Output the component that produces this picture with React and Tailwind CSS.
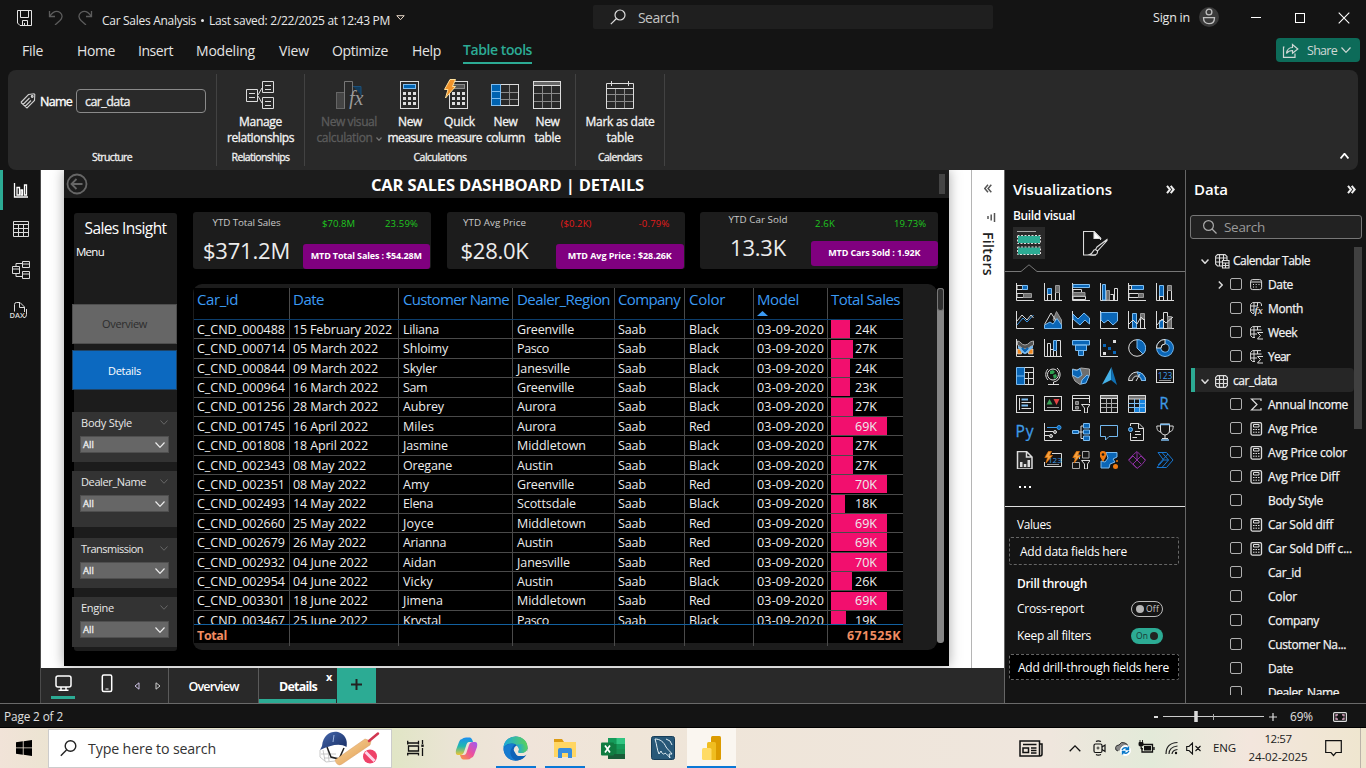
import React, { useLayoutEffect, useRef } from "react";

/* A single line of text whose tracking is tuned so that it fills w pixels. */
function T({ w, className = "", vertical, children }) {
  const ref = useRef(null);
  useLayoutEffect(() => {
    const el = ref.current;
    if (!w || !el) return;
    el.style.letterSpacing = "0px";
    const box = el.getBoundingClientRect();
    const natural = vertical ? box.height : box.width;
    el.style.letterSpacing = (w - natural) / el.textContent.length + "px";
  }, [w, vertical, children]);
  return (
    <span ref={ref} className={"inline-block shrink-0 whitespace-nowrap " + className}>
      {children}
    </span>
  );
}

const W = "#dcdcdc";
const B = "#0a66b7";
const L = "#7cbcf0";
const G = "#6e6e6e";

function Svg({ w = 18, h, vb, className = "", children, sw = 1 }) {
  const hh = h || w;
  return (
    <svg width={w} height={hh} viewBox={vb || `0 0 ${w} ${hh}`} fill="none" stroke={W} strokeWidth={sw} className={"block shrink-0 " + className}>
      {children}
    </svg>
  );
}

function Chevron({ w = 8, h = 5, sw = 1.2, c = W, dir = "down", className = "" }) {
  const d = { down: `M.5 .5L${w / 2} ${h - 0.7}L${w - 0.5} .5`, up: `M.5 ${h - 0.5}L${w / 2} .7L${w - 0.5} ${h - 0.5}`, right: `M.8 .5L${w - 0.8} ${h / 2}L.8 ${h - 0.5}` }[dir];
  return (
    <Svg w={w} h={h} sw={sw} className={className}>
      <path d={d} stroke={c} />
    </Svg>
  );
}

/* ---------- Title bar ---------- */
function TitleBar() {
  return (
    <div className="flex h-[35px] items-center">
      <Svg w={16} className="ml-[17px]">
        <path d="M.5.5H14.500V15.500H3L.5 13Z M3.500.5V7.500H11.500V.5 M5.500 15V10.500H10.500V15 M7.500 13V15" stroke="#e6e6e6" />
      </Svg>
      <Svg w={15} className="ml-[15px]" sw={1.3}>
        <path d="M1.5 1V6.5H7 M1.5 6.5C5 1.5 9 .5 12 2.5C15 5 14.500 8 12 10.500L7 15" stroke="#5c5c5c" />
      </Svg>
      <Svg w={15} className="ml-[15px]" sw={1.3}>
        <path d="M13.500 1V6.500H8 M13.500 6.500C10 1.500 6 .5 3 2.500C0 5 .5 8 3 10.500L8 15" stroke="#5c5c5c" />
      </Svg>
      <div className="ml-[9px] mt-[6px] flex h-5 items-center text-[12px] leading-5 text-[#e8e8e8]">
        <T w={94}>Car Sales Analysis</T>
        <span className="mx-[5px] mt-[-1px] size-[3px] rounded-full bg-[#e8e8e8]" />
        <T w={181}>Last saved: 2/22/2025 at 12:43 PM</T>
      </div>
      <Svg w={9} h={6} className="ml-[6px]">
        <path d="M.8.7H8.200L4.500 4.700Z" stroke="#e8d8c8" />
      </Svg>
      <div className="ml-[188px] mt-[-1px] flex h-6 w-[400px] items-center rounded-[2px] bg-[#1f1f1f]">
        <Svg w={16} className="ml-[17px]" sw={1.2}>
          <circle cx="10" cy="6" r="5" /><path d="M6.500 9.500L.8 15.200" />
        </Svg>
        <T w={41} className="ml-3 text-[14px] text-[#c4c4c4]">Search</T>
      </div>
      <T w={37} className="ml-[160px] mt-[2px] text-[12.500px] text-[#e8e8e8]">Sign in</T>
      <div className="ml-[9px] mt-[-2px] flex size-5 items-center justify-center rounded-full bg-[#3a3a3a]">
        <Svg w={14} h={17} sw={1.300}>
          <circle cx="7" cy="4" r="2.900" stroke="#c0c0c0" /><path d="M1.500 9.700H12.500C12.500 13.500 10.500 15.700 7 15.700S1.500 13.500 1.500 9.700Z" stroke="#c0c0c0" />
        </Svg>
      </div>
      <div className="ml-[32px] h-px w-[10px] bg-white" />
      <div className="ml-[34px] size-[10px] border border-white" />
      <Svg w={12} className="ml-[33px]" sw={1.100}>
        <path d="M.7.7L11.300 11.300M11.300.7L.7 11.300" stroke="#fff" />
      </Svg>
    </div>
  );
}

function MenuBar() {
  return (
    <div className="flex h-[35px] items-center pb-[5px] text-[14px] text-[#e4e4e4]">
      <T w={21} className="ml-[22px]">File</T>
      <T w={38} className="ml-[34px]">Home</T>
      <T w={35} className="ml-[23px]">Insert</T>
      <T w={59} className="ml-[23px]">Modeling</T>
      <T w={30} className="ml-[24px]">View</T>
      <T w={56} className="ml-[23px]">Optimize</T>
      <T w={29} className="ml-[24px]">Help</T>
      <div className="ml-[22px] flex h-7 items-start border-b-2 border-[#2cab94] font-semibold text-[#2cab94]">
        <T w={69} className="leading-[27px]">Table tools</T>
      </div>
      <div className="ml-[744px] flex h-6 w-[84px] items-center rounded-[4px] bg-[#0d6b59] text-[#d0d8d5]">
        <Svg w={17} h={15} className="ml-[6px]" sw={1.200}>
          <path d="M2.500 4H1.500V14.300H13V10.500M4.500 10.500C5 6.500 7 4.500 10.500 4.500V1.500L15.800 6L10.500 10.200V7.500C8 7.500 6 8.300 4.500 10.500Z" stroke="#d0d8d5" />
        </Svg>
        <T w={30} className="ml-[8px] mt-[2px] text-[12.500px]">Share</T>
        <Chevron w={10} h={6} c="#d0d8d5" className="ml-[4px]" />
      </div>
    </div>
  );
}

/* ---------- Ribbon ---------- */
function Calc({ blue }) {
  return (
    <>
      <rect x="5.500" y=".5" width="18" height="27" />
      <rect x="8.500" y="3.500" width="12" height="4" fill={blue ? "#0063b1" : "#555"} stroke={blue ? L : "#8a8a8a"} />
      {[11, 16, 21].map((y) => [8, 13, 18].map((x) => <rect key={x + "-" + y} x={x} y={y} width="3" height="3" fill={W} stroke="none" />))}
    </>
  );
}

function Tool({ w, icon, a, b, wa, wb, off, className = "" }) {
  return (
    <div className={"flex shrink-0 flex-col items-center text-[12px] leading-4 [-webkit-text-stroke:0.300px] " + (off ? "text-[#5c5c5c] " : "text-[#f4f4f4] ") + className} style={{ width: w }}>
      <div className="mb-[5px] h-7">{icon}</div>
      <T w={wa}>{a}</T>
      <div className="flex items-center">
        <T w={wb}>{b}</T>
        {off && <Chevron w={6} h={4} c="#777" className="ml-[3px] mt-[2px]" />}
      </div>
    </div>
  );
}

function Group({ w, label, lw, children }) {
  return (
    <div className="flex h-[92px] shrink-0 flex-col items-center border-r border-[#424242]" style={{ width: w }}>
      <div className="flex h-[75px] w-full pt-[7px]">{children}</div>
      <T w={lw} className="text-[10.500px] leading-[18px] text-[#f0f0f0] [-webkit-text-stroke:0.300px]">{label}</T>
    </div>
  );
}

function Ribbon() {
  return (
    <div className="ml-2 flex h-[100px] w-[1350px] rounded-[8px] bg-[#292929] pt-1">
      <Group w={209} label="Structure" lw={40}>
        <Svg w={16} className="ml-[12px] mt-[12px]" sw={1.100}>
          <path d="M.8 9.500L8.500 1.500L14 .8L14.800 1.500L14.500 7.500L7 15L1 9.500M3 11.500L9.500 5M5 13.500L11 7.500" stroke="#cfcfcf" /><circle cx="12.200" cy="3.500" r=".9" />
        </Svg>
        <T w={32} className="ml-[4px] mt-[11px] text-[12.500px] leading-5 text-white [-webkit-text-stroke:0.350px]">Name</T>
        <div className="ml-[4px] mt-[8px] flex h-6 w-[130px] items-center rounded-[4px] border border-[#8a8a8a] pl-2">
          <T w={45} className="mt-[2px] text-[12.500px] text-[#f0f0f0] [-webkit-text-stroke:0.300px]">car_data</T>
        </div>
      </Group>
      <Group w={88} label="Relationships" lw={58}>
        <Tool w={87} a="Manage" wa={43} b="relationships" wb={67} icon={
          <Svg w={28} className="mr-px">
            <path d="M.5 8.500H11.500V20.500H.5ZM16.500.5H27.500V11.500H16.500ZM16.500 16.500H27.500V27.500H16.500ZM3 12.500H9M3 16.500H9M19 4.500H25M19 8.500H25M19 20.500H25M19 24.500H25M12 14L16 7M12 15L16 22" />
          </Svg>} />
      </Group>
      <Group w={271} label="Calculations" lw={53}>
        <Tool off className="ml-[9px]" w={70} a="New visual" wa={56} b="calculation" wb={56} icon={
          <Svg w={28} className="ml-[2px]">
            <rect x=".5" y="11.500" width="8" height="16" fill="#444" stroke="#666" /><path d="M8.500 27.500V.5H16.500V14" stroke="#777" />
            <path d="M17 5.500H25V14" fill="#123c5c" stroke="#1c5079" />
            <text x="13" y="24" stroke="none" fill="#999" fontSize="20" fontStyle="italic" fontFamily="Liberation Serif, serif">fx</text>
          </Svg>} />
        <Tool w={52} a="New" wa={24} b="measure" wb={45} icon={<Svg w={28} className="mr-[2px]"><Calc blue /></Svg>} />
        <Tool w={47} a="Quick" wa={31} b="measure" wb={45} icon={
          <Svg w={28} h={31} className="-mt-[3px] mr-[3px]">
            <g transform="translate(0 3)"><Calc /></g>
            <path d="M6 1.500H11.500L8.500 8.500H11.500L1.500 20L4 11.500H.5Z" fill="#f0932b" stroke="#ffdf9a" />
          </Svg>} />
        <Tool w={45} a="New" wa={24} b="column" wb={39} icon={
          <Svg w={28} className="mr-px">
            <path d="M1 11.500H27M1 18.500H27M18.500 4V25" stroke="#8a8a8a" />
            <rect x=".5" y="3.500" width="27" height="21" /><path d="M.5 3.500H9.500V24.500H.5ZM.5 10.500H9.500M.5 17.500H9.500" fill="#0063b1" stroke={L} />
          </Svg>} />
        <Tool w={39} a="New" wa={24} b="table" wb={26} icon={
          <Svg w={28} className="mr-px">
            <rect x=".5" y=".5" width="27" height="4" fill="#666" /><path d="M1 12.500H27M1 20.500H27M9.500 5V27M18.500 5V27" stroke="#8a8a8a" /><rect x=".5" y=".5" width="27" height="27" />
          </Svg>} />
      </Group>
      <Group w={89} label="Calendars" lw={44}>
        <Tool w={88} a="Mark as date" wa={69} b="table" wb={27} icon={
          <Svg w={28}>
            <path d="M1 13.500H27M1 20.500H27M9.500 8V27M18.500 8V27" stroke="#8a8a8a" /><path d="M.5 2.500H27.500V27.500H.5ZM.5 7.500H27.500M5.500 0V5M22.500 0V5" />
          </Svg>} />
      </Group>
      <div className="flex flex-1 items-end justify-end pb-[11px] pr-[9px]">
        <Chevron dir="up" w={9} h={6} sw={1.800} c="#fff" />
      </div>
    </div>
  );
}

/* ---------- Left rail ---------- */
function Rail() {
  return (
    <div className="flex w-[41px] shrink-0 flex-col items-center border-r border-[#4a4a4a]">
      <div className="flex h-10 w-full items-center border-l-[3px] border-[#2cab94] pl-[10px]">
        <Svg w={15} sw={1.300}><path d="M1.500 0V14H15M4 12V4.500H6.500V12ZM8 12V7H9.500V12ZM11.500 12V2H13.500V12Z" stroke="#fff" /></Svg>
      </div>
      <Svg w={16} className="ml-px mt-[11px]"><path d="M.5.5H15.500V15.500H.5ZM.5 3.500H15.500M.5 7.500H15.500M.5 11.500H15.500M5.500 3.500V15.500M10.500 3.500V15.500" /></Svg>
      <Svg w={18} className="ml-px mt-[24px]"><path d="M.5 5.500H7.500V12.500H.5ZM.5 8H7.500M10.500.5H17.500V6.500H10.500ZM10.500 3H17.500M10.500 10.500H17.500V17.500H10.500ZM10.500 13H17.500M4 5V2.500H10M4 13V15.500H10" /></Svg>
      <Svg w={20} h={17} className="mr-[2px] mt-[23px]">
        <path d="M5.500 9.500V2.500Q5.500.5 7.500.5H11L15.500 5V10M10.500.5V5.500H15.500M17.500 7V12.500Q17.500 15.500 15 15.800" />
        <text x=".5" y="16" stroke="none" fill={W} fontSize="7.500" fontFamily="Open Sans, sans-serif" fontWeight="600">DAX</text>
      </Svg>
    </div>
  );
}

/* ---------- Report page ---------- */
function Slicer({ label, lw, className = "" }) {
  return (
    <div className={"-ml-[2px] w-[105px] bg-[#333333] px-2 pt-[2px] " + className}>
      <div className="flex h-[18px] items-center justify-between pr-px">
        <T w={lw} className="ml-[1px] text-[11px] text-[#e8e8e8]">{label}</T>
        <Chevron w={8} h={5} c="#666" sw={1} className="mb-[2px]" />
      </div>
      <div className="mt-[4px] flex h-[17px] items-center justify-between border border-[#4f4f4f] bg-[#666666] pl-[2px] pr-[3px]">
        <T w={11} className="mt-[2px] text-[9.500px] text-[#f0f0f0] [-webkit-text-stroke:0.300px]">All</T>
        <Chevron w={10} h={6} c="#eee" sw={1.200} />
      </div>
    </div>
  );
}

function SidePanel() {
  return (
    <div className="ml-[10px] mt-[15px] h-[438px] w-[103px] shrink-0 rounded-[3px] bg-[#1c1c1c]">
      <div className="flex h-[28px] items-center justify-center"><T w={82} className="mt-[4px] text-[15.500px] text-white">Sales Insight</T></div>
      <div className="flex h-5 items-center pl-[2px]"><T w={28} className="mt-[2px] text-[11.500px] text-white">Menu</T></div>
      <div className="-ml-[2px] mt-[43px] flex h-[40px] w-[105px] items-center justify-center border border-[#4e4e4e] bg-[#666666]"><T w={45} className="text-[11px] text-[#2d2d2d]">Overview</T></div>
      <div className="-ml-[2px] mt-[6px] flex h-[40px] w-[105px] items-center justify-center border border-[#1e4468] bg-[#0c69c0]"><T w={33} className="mt-[2px] text-[11px] text-white">Details</T></div>
      <Slicer label="Body Style" lw={51} className="mt-[22px] h-[50px]" />
      <Slicer label="Dealer_Name" lw={65} className="mt-[9px] h-[56px]" />
      <Slicer label="Transmission" lw={62} className="mt-[11px] h-[50px]" />
      <Slicer label="Engine" lw={33} className="mt-[9px] h-[50px]" />
    </div>
  );
}

function Card({ label, lw, value, vw, left, color, d1, d1w, d2, d2w, dl, dg, btn, bw, lead, up }) {
  return (
    <div className="flex h-[57px] w-[238px] shrink-0 rounded-[3px] bg-[#1c1c1c]">
      <div className={"flex shrink-0 flex-col items-center " + lead + (up ? " mt-0" : " mt-[3px]")} style={{ width: left }}>
        <T w={lw} className="text-[9.800px] leading-[15px] text-[#c9c9c9]">{label}</T>
        <T w={vw} className="mt-[4px] text-[22px] leading-[32px] text-[#ececec]">{value}</T>
      </div>
      <div className="flex flex-1 flex-col items-end">
        <div className={"flex h-[14px] w-full items-center pt-[11px] text-[9.500px] " + color}>
          <span className={dl}><T w={d1w}>{d1}</T></span>
          <span className={dg}><T w={d2w}>{d2}</T></span>
        </div>
        <div className={"flex h-[25px] w-[127.500px] items-center justify-center rounded-[3px] bg-[#80007f] pb-[2px] " + (up ? "mt-[15px]" : "mr-px mt-[18px]")}>
          <T w={bw} className="text-[9px] font-bold text-white">{btn}</T>
        </div>
      </div>
    </div>
  );
}

const cols = [
  ["Car_id", 41, "w-[96px]"], ["Date", 31, "w-[109px]"], ["Customer Name", 106, "w-[114px]"], ["Dealer_Region", 93, "w-[102px]"],
  ["Company", 62, "w-[70px]"], ["Color", 36, "w-[69px]"], ["Model", 42, "w-[74px]"], ["Total Sales", 69, "w-[76px]"],
];
const rows = [
  ["C_CND_000488", "15 February 2022", "Liliana", "Greenville", "Black", 24], ["C_CND_000714", "05 March 2022", "Shloimy", "Pasco", "Black", 27],
  ["C_CND_000844", "09 March 2022", "Skyler", "Janesville", "Black", 24], ["C_CND_000964", "16 March 2022", "Sam", "Greenville", "Black", 23],
  ["C_CND_001256", "28 March 2022", "Aubrey", "Aurora", "Black", 27], ["C_CND_001745", "16 April 2022", "Miles", "Aurora", "Red", 69],
  ["C_CND_001808", "18 April 2022", "Jasmine", "Middletown", "Black", 27], ["C_CND_002343", "08 May 2022", "Oregane", "Austin", "Black", 27],
  ["C_CND_002351", "08 May 2022", "Amy", "Greenville", "Red", 70], ["C_CND_002493", "14 May 2022", "Elena", "Scottsdale", "Black", 18],
  ["C_CND_002660", "25 May 2022", "Joyce", "Middletown", "Red", 69], ["C_CND_002679", "26 May 2022", "Arianna", "Austin", "Red", 69],
  ["C_CND_002932", "04 June 2022", "Aidan", "Janesville", "Red", 70], ["C_CND_002954", "04 June 2022", "Vicky", "Austin", "Black", 26],
  ["C_CND_003301", "18 June 2022", "Jimena", "Middletown", "Red", 69], ["C_CND_003467", "25 June 2022", "Krystal", "Pasco", "Black", 19],
];
const textWidths = {
  "15 February 2022": 99, "05 March 2022": 85, "09 March 2022": 85, "16 March 2022": 85, "28 March 2022": 85, "16 April 2022": 75, "18 April 2022": 75,
  "08 May 2022": 73, "14 May 2022": 73, "25 May 2022": 73, "26 May 2022": 73, "04 June 2022": 75, "18 June 2022": 75, "25 June 2022": 75,
  Liliana: 36, Shloimy: 45, Skyler: 34, Sam: 24, Aubrey: 41, Miles: 31, Jasmine: 45, Oregane: 49, Amy: 26, Elena: 30, Joyce: 31, Arianna: 43, Aidan: 33, Vicky: 30, Jimena: 40, Krystal: 38,
  Greenville: 57, Pasco: 32, Janesville: 53, Aurora: 39, Middletown: 69, Austin: 36, Scottsdale: 59, Black: 30, Red: 21,
};

function Cell({ i, children, className = "" }) {
  const pad = i === 2 || i === 3 || i === 5 ? "pl-[4px] " : "pl-[3px] ";
  return <div className={"flex shrink-0 items-center [&>span]:mt-[2px] " + pad + cols[i][2] + (i < 7 ? " border-r border-[#4a4a4a] " : " ") + className}>{children}</div>;
}

function DataTable() {
  return (
    <div className="h-[366px] w-[744px] rounded-[9px] bg-[#1c1c1c] pt-1">
      <div className="ml-px flex h-[355px] w-[709px] flex-col bg-black">
        <div className="flex h-[32px] shrink-0 border-b border-[#0c3d6b] text-[15px] text-[#3b9af3]">
          {cols.map(([name, w], i) => (
            <Cell i={i} key={name} className="!items-start">
              <div className="flex flex-col">
                <T w={w} className="leading-[23px]">{name}</T>
                {name === "Model" && <Svg w={11} h={5}><path d="M5.500 0L11 5H0Z" fill="#3b9af3" stroke="none" /></Svg>}
              </div>
            </Cell>
          ))}
        </div>
        <div className="h-[304px] shrink-0 overflow-hidden text-[12.500px] text-[#ededed]">
          {rows.map((r) => (
            <div key={r[0]} className="flex h-[19.400px] border-b border-[#4a4a4a]">
              <Cell i={0}><T w={88}>{r[0]}</T></Cell>
              <Cell i={1}><T w={textWidths[r[1]]}>{r[1]}</T></Cell>
              <Cell i={2}><T w={textWidths[r[2]]}>{r[2]}</T></Cell>
              <Cell i={3}><T w={textWidths[r[3]]}>{r[3]}</T></Cell>
              <Cell i={4}><T w={28}>Saab</T></Cell>
              <Cell i={5}><T w={textWidths[r[4]]}>{r[4]}</T></Cell>
              <Cell i={6}><T w={67}>03-09-2020</T></Cell>
              <Cell i={7} className="relative">
                <div className="h-[18px] bg-[#f20f6e]" style={{ width: r[5] * 0.805 }} />
                <T w={22} className="absolute left-[27px]">{r[5] + "K"}</T>
              </Cell>
            </div>
          ))}
        </div>
        <div className="flex flex-1 border-t border-[#12609f] text-[12.500px] font-bold text-[#f08d62]">
          {cols.map(([name], i) => (
            <Cell i={i} key={name} className={i === 7 ? "justify-end pr-[3px]" : ""}>
              {i === 0 && <T w={30}>Total</T>}
              {i === 7 && <T w={54}>671525K</T>}
            </Cell>
          ))}
        </div>
      </div>
    </div>
  );
}

function ReportPage() {
  return (
    <div className="ml-[23px] h-[496px] w-[885px] shrink-0 bg-black shadow-[0_0_12px_rgba(0,0,0,0.35)]">
      <div className="flex h-[28px] items-center bg-[#1c1c1c]">
        <Svg w={22} sw={1.800} className="ml-[2px]"><circle cx="11" cy="11" r="9.500" stroke="#666" /><path d="M16.500 11H6M10.500 6L5.500 11L10.500 16" stroke="#666" /></Svg>
        <T w={273} className="ml-[283px] mt-[2px] text-[16.500px] font-bold text-white">CAR SALES DASHBOARD | DETAILS</T>
        <div className="ml-[295px] h-5 w-[6px] bg-[#444]" />
      </div>
      <div className="flex">
        <SidePanel />
        <div className="ml-[16px] mt-[14px]">
          <div className="flex gap-[15.500px]">
            <Card label="YTD Total Sales" lw={68} value="$371.2M" vw={87} left={87} lead="ml-[10px]" color="text-[#1fc71f]" d1="$70.8M" d1w={33} d2="23.59%" d2w={33} dl="ml-[32px]" dg="ml-[30px]" btn="MTD Total Sales : $54.28M" bw={111} />
            <Card label="YTD Avg Price" lw={63} value="$28.0K" vw={68} left={68} lead="ml-[14px]" color="text-[#e31b1b]" d1="($0.2K)" d1w={31} d2="-0.79%" d2w={31} dl="ml-[32px]" dg="ml-[47px]" btn="MTD Avg Price : $28.26K" bw={104} />
            <Card up label="YTD Car Sold" lw={59} value="13.3K" vw={56} left={60} lead="ml-[28px]" color="text-[#1fc71f]" d1="2.6K" d1w={20} d2="19.73%" d2w={32} dl="ml-[27px]" dg="ml-[59px]" btn="MTD Cars Sold : 1.92K" bw={92} />
          </div>
          <div className="mt-[15px] flex">
            <DataTable />
            <div className="mt-1 h-[355px] w-[7px] rounded-[3px] bg-[#858585]"><div className="h-[23px] rounded-[3px] border border-[#777] bg-[#303030]" /></div>
          </div>
        </div>
      </div>
    </div>
  );
}

function PageTabs() {
  return (
    <div className="flex h-[35px] bg-[#292929] font-semibold text-white">
      <div className="mb-[4px] ml-[10px] flex w-6 flex-col items-center border-b-[3px] border-[#2cab94] pt-[7px]">
        <Svg w={17} h={17} sw={1.500}><rect x="1" y="1" width="15" height="11" rx="2" stroke="#fff" /><path d="M6 12V14.500M11 12V14.500M3.500 15.200H13.500" stroke="#fff" /></Svg>
      </div>
      <Svg w={12} h={19} sw={1.500} className="ml-[26px] mt-[6px]"><rect x="1.300" y="1" width="9.400" height="16.500" rx="1.500" stroke="#fff" /><path d="M4.500 15H7.500" stroke="#fff" strokeWidth="1" /></Svg>
      <Svg w={6} h={8} className="ml-[21px] mt-[14px]"><path d="M5 .8V7.200L1 4Z" stroke="#cfc4e6" /></Svg>
      <Svg w={6} h={8} className="ml-[15px] mt-[14px]"><path d="M1 .8V7.200L5 4Z" stroke="#cfcfcf" /></Svg>
      <div className="ml-[7px] flex w-[91px] items-center justify-center border-x border-[#5a5a5a] pt-[3px] text-[12.500px]"><T w={50}>Overview</T></div>
      <div className="flex w-[77px] items-center border-b-[4px] border-[#2cab94] pl-[20px] pt-[3px]"><T w={38} className="mt-[4px] text-[12.500px] font-bold">Details</T><span className="mb-[18px] ml-[9px] text-[11px] font-bold leading-none">x</span></div>
      <div className="ml-px flex w-[39px] items-center justify-center bg-[#2cab94]"><Svg w={11} className="mb-[3px]" sw={2}><path d="M5.500 0V11M0 5.500H11" stroke="#222" /></Svg></div>
    </div>
  );
}

function FiltersRail() {
  return (
    <div className="flex w-[33px] shrink-0 flex-col items-center border-l border-[#b5b5b5] bg-white">
      <Svg w={8} h={9} className="mt-[14px]" sw={1.500}><path d="M4 .8L.8 4.500L4 8.200M7.300.8L4.100 4.500L7.300 8.200" stroke="#555" /></Svg>
      <Svg w={10} h={9} className="ml-[6px] mt-[20px]" sw={1.500}><path d="M8.500 0V9M5.200 1.500V7.500M2 3V6" stroke="#555" /></Svg>
      <T w={44} vertical className="mt-[10px] text-[14px] font-semibold leading-4 text-[#222] [writing-mode:vertical-rl]">Filters</T>
    </div>
  );
}

/* ---------- Visualization icons ---------- */
const axis = <path d="M.5 0V17.500H18" />;
const bolt = <path d="M4.500.3H7.500L5.500 4.500H8.500L2 12L3.500 6.500H.8Z" fill="#f5a03c" stroke="#e06c00" strokeWidth=".7" />;
const num = (x, y, s) => <text x={x} y={y} stroke="none" fill="#3f9ce8" fontSize={s} fontFamily="Open Sans, sans-serif">123</text>;

const vizIcons = [
  <>{axis}<path d="M1 2.500H6.500V6.500H1ZM1 10.500H7.500V14.500H1Z" /><path d="M6.500 2.500H11.500V6.500H6.500Z" fill={B} stroke={L} /><path d="M7.500 10.500H15.500V14.500H7.500Z" fill={G} stroke="#999" /></>,
  <>{axis}<path d="M3.500 5.500H7.500V11.500H3.500Z" fill={B} stroke={L} /><path d="M3.500 11.500H7.500V17.500H3.500ZM11.500 9.500H15.500V17.500H11.500Z" /><path d="M11.500 2.500H15.500V9.500H11.500Z" fill={G} stroke="#999" /></>,
  <>{axis}<path d="M1 1.500H17.500V4.500H1Z" fill={B} stroke={L} /><path d="M1 6.500H9.500V9.500H1ZM1 13.500H13.500V16.500H1Z" /><path d="M1 9.500H13V13H1Z" fill={G} stroke="#999" /></>,
  <>{axis}<path d="M2.500 1.500H5.500V17H2.500Z" fill={B} stroke={L} /><path d="M6.500 7.500H9.500V17H6.500Z" fill={G} stroke="#999" /><path d="M10.500 11.500H13.500V17M14.500 17V5.500H17.500V17" /></>,
  <>{axis}<path d="M3.500 2.500H15.500V6.500H3.500Z" fill={B} stroke={L} /><path d="M1 2.500H3.500V6.500H1ZM1 10.500H10.500V14.500H1Z" /><path d="M10.500 10.500H15.500V14.500H10.500Z" fill={G} stroke="#999" /></>,
  <>{axis}<path d="M3.500 2.500H7.500V13.500H3.500Z" fill={B} stroke={L} /><path d="M3.500 13.500H7.500V17M3.500 13V17M11.500 17V7.500H15.500V17" /><path d="M11.500 2.500H15.500V7.500H11.500Z" fill={G} stroke="#999" /></>,
  <>{axis}<path d="M1 14L7 7L11 11L17.500 4" stroke="#3794e3" /><path d="M1 10L6 4L11 9L15 4L17.500 7" /></>,
  <><path d="M9 9L12.500.5L17.500 9V17Z" fill={G} stroke="#999" /><path d="M.5 13.500L7 2L15 14" /><path d="M.5 17.500V14L6 11L9 13L13 7.500L17.500 14V17.500Z" fill={B} stroke={L} /></>,
  <>{axis}<path d="M1 3L6 8L12 2L17.500 7V13L13 9L8 14L1 8Z" fill={B} stroke={L} /></>,
  <>{axis}<path d="M1 1.500H17.500V10L13 14L8 9L4 12L1 9Z" fill={B} stroke={L} /></>,
  <>{axis}<path d="M4.500 2.500H8.500V17H4.500Z" fill={B} stroke={L} /><path d="M12.500 2.500H16.500V8H12.500Z" fill={G} stroke="#999" /><path d="M12.500 8V17M16.500 8V17M1 13L5 9L9 13L13 6L17 10" /></>,
  <>{axis}<path d="M3.500 9.500H7.500V17H3.500Z" fill={B} stroke={L} /><path d="M7.500 17V1.500H11.500V17" /><path d="M11.500 5.500H15.500V17H11.500Z" fill={G} stroke="#999" /><path d="M1 14L6 8L10 12L17 6" /></>,
  <>{axis}<path d="M1.500 2C5 2 5 6 9 6S13 2 17.500 2V6C14 7 13 10 9 10S5 7 1.500 6Z" fill="#555" stroke="#aaa" /><path d="M1.500 10H5.500V15H1.500ZM12.500 10H17V15H12.500Z" fill="#f08a24" stroke="#fff" strokeWidth=".6" /><path d="M2 8C5 8 6 14 9 14S13 8 17 8" stroke={L} strokeWidth="2.500" /><path d="M6 9L9 12L12 9" stroke={B} strokeWidth="2" /></>,
  <>{axis}<path d="M3.500 4.500H6.500V17M6.500 10.500H9.500V17M3.500 4.500V17M9.500 6V17M12.500 12V17M12.500 1.500H16.500V17" /><path d="M9.500 1.500H12.500V11.500H9.500Z" fill={B} stroke={L} /></>,
  <><path d="M.5 1.500H17.500V6H.5ZM3.500 6H14.500V11.500H3.500ZM6.500 11.500H11.500V16.500H6.500Z" fill={B} stroke={L} /></>,
  <>{axis}<path d="M13 1h3v3h-3zM3 13h3v3h-3z" fill={W} stroke="none" /><path d="M3 5h3v3h-3zM8 8h3v3h-3zM13 12h3v3h-3z" fill={B} stroke="none" /></>,
  <><circle cx="9" cy="9" r="8.300" /><path d="M9 .7A8.300 8.300 0 0 1 15 15L9 9Z" fill={B} stroke={L} /></>,
  <><circle cx="9" cy="9" r="6.300" stroke={L} strokeWidth="5.200" /><circle cx="9" cy="9" r="6.300" stroke={B} strokeWidth="3.500" /><path d="M.5 9A8.500 8.500 0 0 1 9 .5V5A4 4 0 0 0 5 9Z" fill="#181818" /></>,
  <><path d="M.5.5H8.500V17.500H.5Z" fill={B} stroke={L} /><path d="M.5 9H8.500" stroke={L} /><path d="M8.500.5H17.500V17.500H8.500M8.500 5.500H17.500M12.500 5.500V17.500M8.500 11.500H17.500" /></>,
  <><circle cx="9" cy="7.500" r="5.500" /><path d="M6 4L9 3L11 5L9 7L6 7ZM9 8L12 7L13 10L10 12Z" fill="#2ea04f" stroke="none" /><path d="M13 1C18 5 17 14 9.500 15V17M4 17.500H15M4 13C1 10 1 5 4 2" /></>,
  <><path d="M.5 2L5 3L9 1L17.500 2V8L13 15L8 17.500L3 14L.5 9Z" fill={G} stroke="#aaa" /><path d="M.5 2.500L5 3.500L8 1.500L10 8L6 11L.5 8ZM10 13L15 8L17 9L14 16L9 17Z" fill={B} stroke={L} /></>,
  <><path d="M11.500 0L2 17.500L11 13Z" fill="#45b1e8" stroke="none" /><path d="M11.500 0L17 18L11 13Z" fill="#1071b5" stroke="none" /></>,
  <><path d="M.5 13.500A8.500 8.500 0 0 1 17.500 13.500H13.500A4.500 4.500 0 0 0 4.500 13.500Z" fill="#333" /><path d="M9 5A8.500 8.500 0 0 1 17.500 13.500H13.500A4.500 4.500 0 0 0 11 9.500Z" fill={B} stroke={L} /><path d="M8 14L12 7" /></>,
  <><rect x=".5" y="2.500" width="17" height="13" />{num(1.800, 11.500, 8.500)}<path d="M3 13.500H15" stroke="#999" /></>,
  <><rect x=".5" y=".5" width="17" height="17" /><path d="M3.500 3V15" /><path d="M5.500 4.500H12M5.500 10.500H12" stroke={L} strokeWidth="2" /><path d="M5.500 7.500H15M5.500 13.500H15" stroke={W} /></>,
  <><rect x=".5" y="1.500" width="17" height="14" /><path d="M5.500 4L8.500 9.500H2.500Z" fill="#3aa357" stroke="none" /><path d="M9.500 4H15.500L12.500 10Z" fill="#e34545" stroke="none" /><path d="M3 12.500H15" stroke="#999" /></>,
  <><path d="M17.500 8V.5H.5V15.500H9M.5 3.500H17.500" /><path d="M3.500 6.500H6.500V9.500H3.500ZM3.500 11.500H6.500V14H3.500Z" fill={G} stroke="#999" /><path d="M9.500 9.500H18L15.500 13V18H12.500V13Z" /></>,
  <><path d="M.5.5H17.500V3.500H.5Z" fill={G} /><path d="M.5 8.500H17.500M.5 12.500H17.500M6.500 3.500V17.500M11.500 3.500V17.500" stroke="#aaa" /><rect x=".5" y=".5" width="17" height="17" /></>,
  <><path d="M.5.5H17.500V17.500H.5Z" /><path d="M.5.5H17.500V4H.5Z" fill={G} /><path d="M12 5H17V17H6V13H12Z" fill="#1683dd" stroke="none" /><path d="M.5 8.500H17.500M.5 12.500H17.500M6.500 4V17.500M11.500 4V17.500" stroke={L} /></>,
  <text x="3.500" y="14" stroke="#3f9ce8" strokeWidth=".3" fill="#3f9ce8" fontSize="15.500" fontFamily="Open Sans, sans-serif" textLength="9" lengthAdjust="spacingAndGlyphs">R</text>,
  <text x="-.5" y="14" stroke="#3f9ce8" strokeWidth=".3" fill="#3f9ce8" fontSize="15.500" fontFamily="Open Sans, sans-serif" textLength="18">Py</text>,
  <>{axis}<path d="M3 4.500H14" stroke="#3f9ce8" /><circle cx="15" cy="4.500" r="2" fill={B} stroke="#3f9ce8" /><path d="M1 8.500H9M1 12.500H5" /><circle cx="11" cy="9" r="1.500" fill={G} /><circle cx="7" cy="13" r="1.500" fill={G} /></>,
  <><path d="M7 9H9M9 3V15.500M9 3H11M9 9H11M9 15.500H11" /><path d="M.5 7.500H6.500V10.500H.5ZM11.500.5H17.500V5H11.500ZM11.500 7H17.500V11H11.500ZM11.500 13H17.500V17.500H11.500Z" fill={B} stroke={L} /></>,
  <path d="M.5 2.500H17.500V13.500H9L5.500 17V13.500H.5Z" stroke="#73b8ef" />,
  <><path d="M2.500 3V.5H11L15.500 5V17.500H2.500V10M10.500.5V5.500H15.500M7 8.500H12M7 11.500H13M4.500 14.500H9" /><circle cx="2.500" cy="6.500" r="2" fill={B} stroke={L} /></>,
  <><path d="M4.500 1H13.500V7C13.500 10 12 11.500 9 12C6 11.500 4.500 10 4.500 7ZM4.500 3H.8C.8 7 2 8.500 5 9M13.500 3H17.200C17.200 7 16 8.500 13 9M9 12V15.500M6 15.500H12" /><path d="M4 1.500H14M5 17H13" stroke={L} strokeWidth="1.500" /></>,
  <><path d="M1.500.5H10.500L16 6V18H1.500ZM10.500.5V6H16" strokeWidth="1.500" fill="#292929" /><path d="M4 11h2.500v5H4zM7.800 13h2.500v3H7.800zM11.500 9h2.500v7h-2.500z" fill={W} stroke="none" /></>,
  <><path d="M8 2.500H17.500V15.500H.5V11" />{num(4, 11.500, 8)}<path d="M3 13.500H15" stroke="#999" />{bolt}</>,
  <><path d="M10.500.5H17V7H10.500ZM.5 11.500H7.500V17.500H.5Z" stroke="#aaa" /><path d="M3 8V4H7.500V8" stroke={L} /><path d="M9.500 9.500H18L15.500 13V18H12.500V13Z" />{bolt}</>,
  <><path d="M6 1.500H17V6L13 8L15 11L10 13L9 17H1V10L5 11L8 7Z" fill={B} stroke={L} /><path d="M3 0C-1 0-1 4 .5 6.500L3 11L5.500 6.500C7 4 7 0 3 0Z" fill="#ee7a12" stroke="none" /><circle cx="3" cy="3.500" r="1.300" fill="#181818" stroke="none" /><circle cx="15.500" cy="15.500" r="2.500" fill="#ee7a12" stroke="none" /><circle cx="17" cy="10" r="1" fill="#ee7a12" stroke="none" /></>,
  <path d="M5.500 3.500L9 .5L17.500 9L14 13.500L9 17.500L.5 9ZM5 5L13 13M13 5L5 13M9 9L9 1M1 9L5 5M5 13L9 17M13 5L17 9" stroke="#8b2fa0" />,
  <path d="M2 1.500H10.500L17 9L10.500 16.500H1L7.500 9ZM6 1.500L12.500 9L6 16.500M7.500 9H12.500M2 14L12 3" stroke="#1775cf" />,
];

function DoubleRight({ className = "" }) {
  return <Svg w={9} h={9} sw={2} className={className}><path d="M1 .8L4 4.500L1 8.200M4.700.8L7.700 4.500L4.700 8.200" stroke="#eee" /></Svg>;
}

function VizPane() {
  return (
    <div className="flex w-[182px] shrink-0 flex-col border-x border-[#666] text-white">
      <div className="flex items-center justify-between pl-2 pr-[10px] pt-[9px]">
        <T w={99} className="text-[15px] font-semibold leading-5">Visualizations</T>
        <DoubleRight />
      </div>
      <T w={62} className="ml-2 mt-[8px] self-start text-[12px] font-semibold leading-[18px]">Build visual</T>
      <div className="mt-[2px] flex pl-2">
        <div className="flex size-8 items-center justify-center bg-[#292929]">
          <Svg w={24}>
            <path d="M0 .5H19" stroke="#aaa" /><path d="M1 5H23V12H1ZM1 16.500H23V23.500H1Z" fill="#2cab94" stroke="none" /><path d="M.5 4.500H23.500V12.500H.5ZM.5 16H23.500V23.500H.5Z" strokeDasharray="2 1.500" />
          </Svg>
        </div>
        <Svg w={25} h={25} className="ml-[38px] mt-[4px]" sw={1.100}>
          <path d="M13 24H.5V.5H11L17.500 7V9" /><path d="M11 .5V7.500H17.500Z" fill="#fff" /><path d="M24 8.500L14 16L12.500 18.500L14.500 20L24 9.500ZM12.500 18.500C9 18.500 11 22.500 6.500 23.500C11 25 15 24 14.500 20" />
        </Svg>
      </div>
      <Svg w={180} h={8} className="mt-[5px]"><path d="M0 7.500H16L24 .8L32 7.500H180" stroke="#777" /></Svg>
      <div className="ml-[11px] mt-[11px] grid w-[158px] grid-cols-6 gap-[10px]">
        {vizIcons.map((icon, i) => <Svg w={18} key={i}>{icon}</Svg>)}
      </div>
      <div className="ml-[14px] mt-[17px] flex gap-[3px]"><i className="size-[2px] bg-white" /><i className="size-[2px] bg-white" /><i className="size-[2px] bg-white" /></div>
      <div className="mt-[18px] h-px bg-[#e0e0e0]" />
      <T w={34} className="ml-3 mt-[8px] self-start text-[11.800px] leading-[18px]">Values</T>
      <div className="ml-1 mt-[4px] flex h-[28px] w-[170px] items-center rounded-[2px] border border-dashed border-[#666] pl-[10px] pt-[2px]"><T w={107} className="text-[12px]">Add data fields here</T></div>
      <T w={70} className="ml-3 mt-[10px] self-start text-[12px] font-semibold leading-[18px]">Drill through</T>
      <div className="mt-[5px] flex h-[22px] items-center justify-between pl-3 pr-[22px]">
        <T w={67} className="text-[12px]">Cross-report</T>
        <div className="flex h-4 w-8 items-center rounded-full border border-[#bbb] pl-1"><i className="size-2 rounded-full bg-[#b5b5b5]" /><T w={13} className="ml-[2px] text-[8.500px] text-[#ccc]">Off</T></div>
      </div>
      <div className="mt-[5px] flex h-[22px] items-center justify-between pl-3 pr-[22px]">
        <T w={74} className="text-[12px]">Keep all filters</T>
        <div className="flex h-4 w-8 items-center rounded-full bg-[#2cab94] pl-[5px]"><T w={12} className="text-[8.500px] text-[#173a34]">On</T><i className="ml-[2px] size-2 rounded-full bg-[#222]" /></div>
      </div>
      <div className="ml-1 mt-[7px] flex h-[26px] w-[170px] items-center rounded-[2px] border border-dashed border-[#666] bg-black pl-[8px] pt-[2px]"><T w={151} className="text-[12px]">Add drill-through fields here</T></div>
    </div>
  );
}

/* ---------- Data pane ---------- */
const fieldIcons = {
  date: <><rect x=".6" y="1.600" width="11" height="10" rx="2" /><path d="M.6 4H11.600M3 6.500H4M5.700 6.500H6.700M8.500 6.500H9.500M3 9H4M5.700 9H6.700" /></>,
  fx: <><path d="M4 11.500H2.500L.6 9.500V2.500L2.500.6H10Q12 1 11.500 4M.6 4H8M.6 8H4M4 .6V11M7.500.6V4" /><text x="4.500" y="11.500" stroke="none" fill={W} fontSize="10" fontStyle="italic" fontWeight="700" fontFamily="Liberation Serif, serif">fx</text></>,
  sum: <><path d="M5 11.500H2.500L.6 9.500V2.500L2.500.6H11M.6 4H11.500M.6 8H7M4 .6V11.500M7.500.6V4" /><path d="M13 6.500H7.500L10.500 9.500L7.500 13H13" /></>,
  sigma: <path d="M11 3V1H1.500L7 6.500L1.500 12H11V10" strokeWidth="1.200" />,
  calc: <><rect x="1" y=".6" width="10.500" height="12.500" rx="1.500" strokeWidth="1.300" /><path d="M3.500 2.500H9V5H3.500ZM3 7.500H4.500M5.500 7.500H7M8 7.500H9.500M3 10.200H4.500M5.500 10.200H7M8 10.200H9.500" /></>,
};
const calendarFields = [["Date", 25, "date"], ["Month", 35, "fx"], ["Week", 29, "sum"], ["Year", 22, "sum"]];
const carFields = [
  ["Annual Income", 80, "sigma"], ["Avg Price", 49, "calc"], ["Avg Price color", 79, "calc"], ["Avg Price Diff", 71, "calc"], ["Body Style", 55], ["Car Sold diff", 65, "calc"],
  ["Car Sold Diff c...", 84, "calc"], ["Car_id", 33], ["Color", 29], ["Company", 51], ["Customer Na...", 78], ["Date", 25], ["Dealer_Name", 71],
];
function Field({ name, w, icon, open }) {
  return (
    <div className="flex h-6 shrink-0 items-center pl-[31px]">
      <div className="w-[13px] pl-px">{open && <Chevron dir="right" w={5} h={8} sw={1.400} />}</div>
      <div className="mb-[3px] size-3 shrink-0 rounded-[2px] border border-[#b0b0b0]" />
      <div className="ml-[8px] w-[18px]">{icon && <Svg w={14}>{fieldIcons[icon]}</Svg>}</div>
      <T w={w} className="text-[12px] text-[#f2f2f2] [-webkit-text-stroke:0.250px]">{name}</T>
    </div>
  );
}
function DataPane() {
  return (
    <div className="flex w-[180px] shrink-0 flex-col">
      <div className="flex items-center justify-between pl-2 pr-[10px] pt-[9px] text-white">
        <T w={34} className="text-[15px] font-semibold leading-5">Data</T>
        <DoubleRight />
      </div>
      <div className="ml-1 mt-[16px] flex h-6 w-[172px] shrink-0 items-center rounded-[3px] border border-[#777] bg-[#222]">
        <Svg w={14} className="ml-3" sw={1.200}><circle cx="5.500" cy="5.500" r="4.900" stroke="#aaa" /><path d="M9 9L13.500 13.500" stroke="#aaa" /></Svg>
        <T w={41} className="ml-[7px] text-[13.500px] text-[#9a9a9a]">Search</T>
      </div>
      <div className="mt-2 flex h-[448px]">
        <div className="ml-[5px] flex w-[163px] flex-col overflow-hidden pt-[2px]">
          <div className="flex h-6 shrink-0 items-center pl-[10px]">
            <Chevron w={8} h={5} sw={1.500} />
            <Svg w={15} className="ml-[6px]" sw={1.100}><path d="M7 12H2.500L.6 10V2.500L2.500.6H10L12 2.500V6M.6 4H12M.6 8H7M4.500.6V12M8.500.6V6M7.500 6.500H14V14H7.500ZM7.500 9H14M10.500 9V14M7.500 11.500H14" /></Svg>
            <T w={77} className="ml-[3px] text-[12px] text-[#f2f2f2] [-webkit-text-stroke:0.250px]">Calendar Table</T>
          </div>
          {calendarFields.map(([n, w, ic]) => <div key={n} className="-ml-[5px]"><Field name={n} w={w} icon={ic} open={n === "Date"} /></div>)}
          <div className="-mt-px flex h-6 shrink-0 items-center rounded-r-[4px] border-l-[4px] border-[#2cab94] bg-[#262626] pl-[6px] pt-[2px]">
            <Chevron w={8} h={5} sw={1.500} />
            <Svg w={13} className="ml-[6px]" sw={1.200}><path d="M2.500.6H10.500L12.400 2.500V10.500L10.500 12.400H2.500L.6 10.500V2.500ZM.6 4.500H12.400M.6 8.500H12.400M4.500.6V12.400M8.500.6V12.400" /></Svg>
            <T w={44} className="ml-[5px] text-[12px] text-[#f2f2f2] [-webkit-text-stroke:0.250px]">car_data</T>
          </div>
          <div className="h-px shrink-0" />
          {carFields.map(([n, w, ic]) => <div key={n} className="-ml-[5px]"><Field name={n} w={w} icon={ic} /></div>)}
        </div>
        <div className="h-[182px] w-2 bg-[#404040]" />
      </div>
    </div>
  );
}

function StatusBar() {
  return (
    <div className="flex h-[25px] items-center border-b border-t border-b-black border-t-[#6a6a6a] pt-[2px] text-[11.800px] text-[#e0e0e0]">
      <T w={59} className="ml-1">Page 2 of 2</T>
      <i className="ml-[1091px] h-[2px] w-1 bg-[#ddd]" />
      <Svg w={102} h={12} className="ml-[5px]"><path d="M0 5.500H101" stroke="#ccc" /><path d="M50.500 3V9" stroke="#aaa" /><path d="M33 0V11" strokeWidth="3.500" /></Svg>
      <Svg w={8} className="ml-[4px]" sw={1.200}><path d="M4 0V8M0 4H8" /></Svg>
      <T w={23} className="ml-[13px]">69%</T>
      <Svg w={14} h={10} className="ml-[20px]" sw={1.200}><rect x=".6" y=".6" width="12.800" height="8.800" rx="1" /><path d="M5 2.800H3V4.500M9 2.800H11V4.500M5 7.200H3V5.500M9 7.200H11V5.500" stroke="#e8b0d0" /></Svg>
    </div>
  );
}

/* ---------- Windows taskbar ---------- */
function TaskButton({ on, active, children }) {
  return <div className={"flex h-10 w-[49px] shrink-0 flex-col items-center justify-end " + (active ? "bg-[#faf6f0]" : "")}><div className="flex flex-1 items-center">{children}</div>{on && <div className={"-mt-[2px] h-[2px] bg-[#0a78d6] " + (active ? "w-full" : "w-10")} />}</div>;
}
function Taskbar() {
  return (
    <div className="flex h-10 items-center bg-[linear-gradient(90deg,#f1e3d8_0px,#ece4d2_48px,#e1e5c6_395px,#eae4d4_450px,#f0e4da_520px,#efe5d8_620px,#efe6dd_1050px,#e3ead9_1150px,#f3e6dd_1250px,#efe6cf_1366px)] text-[#1b1b1b]">
      <Svg w={16} className="ml-4"><path d="M0 2.300L6.800 1.300V7.500H0ZM7.600 1.200L16 0V7.500H7.600ZM0 8.300H6.800V14.700L0 13.700ZM7.600 8.300H16V16L7.600 14.800Z" fill="#000" stroke="none" /></Svg>
      <div className="ml-4 flex h-[39px] w-[344px] items-center border border-[#ccc] bg-white">
        <Svg w={17} className="ml-[11px]" sw={1.400}><circle cx="10.500" cy="6" r="5.300" stroke="#222" /><path d="M6.500 10L.8 15.800" stroke="#222" /></Svg>
        <T w={128} className="ml-[11px] mt-px text-[14.200px] text-[#333]">Type here to search</T>
        <Svg w={64} h={36} className="ml-[103px]">
          <defs>
            <linearGradient id="bat" x1="0" y1="0" x2="1" y2="1"><stop offset="0" stopColor="#f9d79c" /><stop offset="1" stopColor="#e09a50" /></linearGradient>
            <linearGradient id="helmet" x1="0" y1="0" x2="1" y2="1"><stop offset="0" stopColor="#4669ae" /><stop offset="1" stopColor="#172c63" /></linearGradient>
          </defs>
          <path d="M1 20L1 27L7 32L16 31M4 20L6 31M9 20L10 31M2 24H17M5 28H19" stroke="#bbb" strokeWidth=".8" />
          <path d="M8 17L12 27L20 29L25 18" stroke="#222" strokeWidth="1.500" />
          <path d="M3 16C4 4 13 .5 19 2C26 4 29 10 27.500 17C21 13 12 15 1 20Z" fill="url(#helmet)" stroke="none" /><path d="M15 5L14 12" stroke="#9eb5df" />
          <path d="M16 30L46 9L52 11L51 15L23 34Q18 37 16 30Z" fill="url(#bat)" stroke="#d99b60" strokeWidth=".5" />
          <path d="M50 11L59 3.500" stroke="#d13650" strokeWidth="2.500" strokeLinecap="round" />
          <circle cx="51" cy="26.500" r="7" fill="#ef4168" stroke="none" /><path d="M46.500 22L55.500 31" stroke="#ffd5e9" strokeWidth="3" />
        </Svg>
      </div>
      <Svg w={17} h={16} className="ml-[15px] mr-[18px]" sw={1.300}><path d="M.7 4.500V.8M11.500.8V4.500M.7 3H11.500M1.500 6H11.500V11H1.500ZM.7 15.500V13.500H11.500V15.500M15.500 0V4M15.500 8V16" stroke="#111" /><rect x="14.300" y="4.500" width="2.400" height="2.400" fill="#111" stroke="none" /></Svg>
      <TaskButton>
        <Svg w={23} h={23}>
          <defs>
            <linearGradient id="c1" x1="0" y1="0" x2="0" y2="1"><stop offset="0" stopColor="#1c8ef0" /><stop offset=".5" stopColor="#20b8b0" /><stop offset="1" stopColor="#f3c532" /></linearGradient>
            <linearGradient id="c2" x1="1" y1="0" x2="0" y2="1"><stop offset="0" stopColor="#9b5cf5" /><stop offset=".5" stopColor="#ec4f9d" /><stop offset="1" stopColor="#f99b3e" /></linearGradient>
          </defs>
          <path d="M7 2Q8 .5 11 .5H15Q17 1 18 5H14Q12 5 11 9L9 15Q8 18 5 18H3Q0 18 1 13L4 5Q5 2 7 2Z" fill="url(#c1)" stroke="none" />
          <path d="M16 21Q15 22.500 12 22.500H8Q6 22 5 18H9Q11 18 12 14L14 8Q15 5 18 5H20Q23 5 22 10L19 18Q18 21 16 21Z" fill="url(#c2)" stroke="none" />
        </Svg>
      </TaskButton>
      <TaskButton on>
        <Svg w={25} h={25}>
          <defs><linearGradient id="e1" x1="0" y1="0" x2="1" y2="0"><stop offset="0" stopColor="#1aa9dc" /><stop offset="1" stopColor="#5bd15a" /></linearGradient></defs>
          <circle cx="12.500" cy="12.500" r="12" fill="#0d62b8" stroke="none" />
          <path d="M.5 12C1 4 7 .5 13 .5C20 .5 25 6 24.500 12C24 16 20 17.500 16.500 17C14.500 16.500 16 15 16 13C16 9.500 12 7.500 8.500 7.500C5 7.500 2 9 .5 12Z" fill="url(#e1)" stroke="none" />
          <path d="M16 13C16 15 14.500 16.500 16.500 17C20 17.500 23 16 24.500 13V20H14L10.500 14Q11 10.500 13.500 9.500Q16 11 16 13Z" fill="#eee5da" stroke="none" />
          <path d="M16 13C16 15 14.500 16.500 16.500 17C20 17.500 24 16 24.500 12L20 8L14 8.500Z" fill="url(#e1)" stroke="none" />
          <path d="M10.500 13C10.500 18 15 21 19 20.500C21 20.300 22.500 19.500 23.500 18.500C21.500 22.500 17 24.800 12.500 24.500L8 20Z" fill="#0d62b8" stroke="none" />
          <path d="M9 12C5 17 9 24 14 24.300C7 26 1 20 .6 13C2 8 8 7 12 8.500Q9.500 9.500 9 12Z" fill="#167bd0" stroke="none" />
        </Svg>
      </TaskButton>
      <TaskButton on>
        <Svg w={22} h={20}><path d="M0 1H8L10 4H0Z" fill="#dd9b12" stroke="none" /><path d="M0 4H22V19H0Z" fill="#ffd663" stroke="none" /><path d="M4 20V12Q4 10 6 10H16Q18 10 18 12V20H14V15H8V20Z" fill="#378dde" stroke="none" /></Svg>
      </TaskButton>
      <TaskButton>
        <Svg w={25} h={23}><path d="M7 1H24V22H7Z" fill="#159b5a" stroke="none" /><path d="M15.500 1H24V7H15.500Z" fill="#31c481" stroke="none" /><path d="M7 7H15.500V12H7ZM7 12H24V17H7Z" fill="#107c41" stroke="none" /><path d="M15.500 12H24V17H15.500Z" fill="#188f52" stroke="none" /><path d="M7 17H24V22H7Z" fill="#185c37" stroke="none" /><rect x="0" y="5.500" width="13" height="13" rx="1" fill="#107c41" stroke="none" /><path d="M4 8.500L9 15.500M9 8.500L4 15.500" stroke="#fff" strokeWidth="1.700" /></Svg>
      </TaskButton>
      <TaskButton>
        <Svg w={24} h={24}><rect x=".5" y=".5" width="23" height="23" rx="2" fill="#285878" stroke="#173d59" /><path d="M4 3C9 3 13 6 15 11C17 14 19 15 21 18L18 18L19 22C17 20 16 18 14 17C13 19 11 18 10 15L8 18C6 14 6 9 4 3ZM15 3Q20 4 21 9" stroke="#e2eef4" /></Svg>
      </TaskButton>
      <TaskButton on active>
        <Svg w={20} h={24}><path d="M9 1.500Q9 0 10.500 0H17.500Q19 0 19 1.500V22.500Q19 24 17.500 24H9Z" fill="#dc9b00" stroke="none" /><path d="M5 7.500Q5 6 6.500 6H12.500Q14 6 14 7.500V24H5Z" fill="#f0bd20" stroke="none" /><path d="M0 13.500Q0 12 1.500 12H8Q9.500 12 9.500 13.500V24H1.500Q0 24 0 22.500Z" fill="#ffdb65" stroke="none" /></Svg>
      </TaskButton>
      <div className="ml-[283px] flex flex-1 items-center">
        <Svg w={24} h={17} sw={1.500}><path d="M1 1H20.500V16H1ZM20.500 4H23V14Q23 16 21 16M4 4.500H17.500M4 8H9.500V12.500H4ZM12 8H17.500M12 10.500H17.500M12 13H17.500" stroke="#111" /></Svg>
        <Svg w={12} h={7} className="ml-[26px]" sw={1.300}><path d="M.7 6.300L6 .9L11.300 6.300" stroke="#111" /></Svg>
        <Svg w={13} h={16} className="ml-[12px]" sw={1.200}><rect x="1" y="4" width="8" height="8.500" rx="1.500" stroke="#111" /><path d="M9 7L12 5V11.500L9 9.500M3 1.500Q5 .3 8 1.500M3 14.500Q5 15.700 8 14.500" stroke="#111" /><circle cx="5" cy="8" r="1" stroke="#111" strokeWidth=".8" /></Svg>
        <Svg w={16} h={16} className="ml-[9px]"><path d="M3 11Q0 10.500 .6 7.500Q1 5 4 5Q6 1 10 3Q13 4 13 7" fill="#888" stroke="#333" /><circle cx="10.500" cy="10.500" r="5" fill="#fff" stroke="#fff" /><path d="M7 10Q9.500 6 13.500 9M14 11Q11.500 15 7.500 12M13.500 6.500V9.500H10.500M7.500 14.500V11.500H10.500" stroke="#0878c9" strokeWidth="1.400" /></Svg>
        <Svg w={17} h={16} className="ml-[7px]" sw={1.300}><path d="M5 4.500H14.500V12H4V8M16 7V10" stroke="#111" /><path d="M6 6H13V10.500H6Z" fill="#111" stroke="none" /><path d="M1 2.500H5V5.500Q3 7 1 5.500ZM2 0V3M4.500 0V3M3 6.500V9H5" fill="#111" stroke="#111" strokeWidth=".9" /></Svg>
        <Svg w={14} h={14} className="ml-[10px]" sw={1.200}><path d="M1 13Q1 2 12.500 1.500M4 13Q4 6 12.500 5M7 13Q7.500 9 12.500 8.500" stroke="#222" /><circle cx="11" cy="12" r="1.200" fill="#111" stroke="none" /></Svg>
        <Svg w={16} h={13} className="ml-[7px]" sw={1.100}><path d="M.7 4.500H3L6.500 1V12L3 8.500H.7ZM9.500 4L14.500 9M14.500 4L9.500 9" stroke="#111" /></Svg>
        <T w={23} className="ml-[11px] text-[11.500px]">ENG</T>
        <div className="ml-[12px] flex w-[60px] flex-col items-center text-[11.500px] leading-[18px]"><T w={27}>12:57</T><T w={59}>24-02-2025</T></div>
        <Svg w={17} h={17} className="ml-[17px]" sw={1.200}><path d="M.7.7H16.300V12.500H11L8.500 15.500L6 12.500H.7Z" stroke="#111" /></Svg>
        <i className="ml-[18px] h-10 w-px bg-[#bbb2a8]" />
      </div>
    </div>
  );
}

export default function App() {
  return (
    <div className="flex h-[768px] w-[1366px] flex-col overflow-hidden bg-[#141414] font-['Open_Sans','Noto_Sans',sans-serif]">
      <TitleBar />
      <MenuBar />
      <Ribbon />
      <div className="flex h-[533px]">
        <Rail />
        <div className="flex w-[963px] shrink-0 flex-col">
          <div className="flex h-[498px] overflow-hidden bg-white">
            <div className="flex w-[930px] shrink-0 overflow-hidden"><ReportPage /></div>
            <FiltersRail />
          </div>
          <PageTabs />
        </div>
        <VizPane />
        <DataPane />
      </div>
      <StatusBar />
      <Taskbar />
    </div>
  );
}
